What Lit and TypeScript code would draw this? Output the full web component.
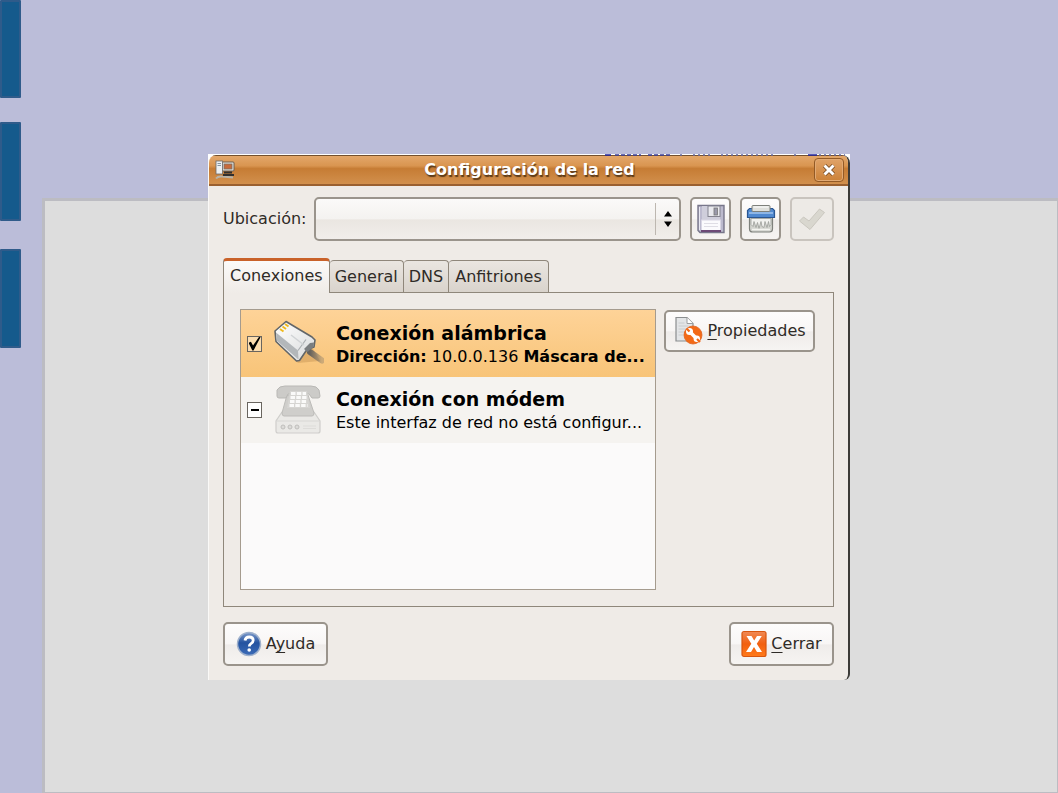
import { LitElement, html, css, svg } from "lit";
import { customElement } from "lit/decorators.js";

const saveIcon = svg`<svg viewBox="0 0 30 32" width="30" height="32" aria-hidden="true">
  <path d="M2 2.500h26v27H4l-2-2z" fill="#bcbace" stroke="#77768a" stroke-width="1.400"/>
  <path d="M3.500 4v23" stroke="#e8e8f2" stroke-width="1"/>
  <rect x="6" y="3" width="18" height="14" fill="#cfcedb"/>
  <rect x="12" y="3" width="12" height="10.500" fill="#e9e9ee" stroke="#84838f"/>
  <rect x="18" y="5" width="3.500" height="7" fill="#9a99aa" stroke="#777" stroke-width=".8"/>
  <rect x="5.500" y="17" width="19" height="10.500" fill="#fbfafd" stroke="#d9d6e4"/>
  <path d="M8 20.500h14M8 23.500h14" stroke="#dfdde5"/>
  <rect x="5" y="27" width="20" height="2" fill="#6d4a77"/>
</svg>`;

const shredIcon = svg`<svg viewBox="0 0 30 32" width="30" height="32" aria-hidden="true">
  <path d="M3.500 14h23v12q0 3-3 3h-17q-3 0-3-3z" fill="#d2d3ce" stroke="#7f817c" stroke-width="1.200"/>
  <path d="M5 15.500v6l2 2 1-5 2 6 1.500-5 1.500 6 2-7 1 5 2 1 1-6 2 6 1.500-6 1 5 1.500-2v-6z" fill="#f1f1ee" stroke="#9b9d98" stroke-width=".8"/>
  <path d="M6 26.500h18" stroke="#f4f4f0" stroke-width="1.500"/>
  <path d="M3.500 5.500h23l2 2v7h-27v-7z" fill="#5089d0" stroke="#2c5792" stroke-width="1.200"/>
  <path d="M3 10h24" stroke="#a3c6ee" stroke-width="1.500"/>
  <rect x="6" y="2.500" width="18" height="6" rx="1" fill="#dedfdb" stroke="#7e807b"/>
  <path d="M7.500 4h15" stroke="#fff"/>
</svg>`;

const applyIcon = svg`<svg viewBox="0 0 30 32" width="30" height="32" aria-hidden="true">
  <path d="M2.500 18l4-4 5.500 4L22.500 6l5 3.500L13 26.500z" fill="#d9d7cf" stroke="#cac7bf" stroke-linejoin="round"/>
</svg>`;

const plugIcon = svg`<svg viewBox="0 0 50 50" width="50" height="50" aria-hidden="true">
  <defs>
    <linearGradient id="plug" x1="0" y1="0" x2="1" y2="1"><stop offset="0" stop-color="#fff"/><stop offset="1" stop-color="#d8dadb"/></linearGradient>
    <linearGradient id="cord" x1="0" y1="0" x2="1" y2="0"><stop offset="0" stop-color="#66625d"/><stop offset="1" stop-color="#8a7d6b" stop-opacity=".4"/></linearGradient>
  </defs>
  <path d="M4 25l20 19 22-2-8-14z" fill="#a8773a" opacity=".3"/>
  <path d="M36 33l12 8.500" stroke="url(#cord)" stroke-width="6" stroke-linecap="round"/>
  <path d="M12 2.500L38 18l3 3-1 7-7 2.500-7.500 11-3 .5L2 22.500 1 12z" fill="url(#plug)" stroke="#626669" stroke-width="1.600" stroke-linejoin="round"/>
  <path d="M2 13.500l22 18 .5 9L3 22z" fill="#b3b7ba"/>
  <path d="M24 31.500l8-11" stroke="#aaaeb1" stroke-width="1.200"/>
  <path d="M30 30l6-6 4-.5-.5 4.500-6 5z" fill="#7b7e80"/>
  <path d="M17 16l13 10" fill="none" stroke="#d0d3d5" stroke-width="1.500"/>
  <path d="M6 10l3.500 2.500M8.500 7.500l3.500 2.500M11 5l3.500 2.500" stroke="#efb91e" stroke-width="2"/>
</svg>`;

const phoneIcon = svg`<svg viewBox="0 0 50 50" width="50" height="50" aria-hidden="true">
  <path d="M8 27h32l6 9v10q0 2-2 2H4q-2 0-2-2V36z" fill="#eae9e6" stroke="#cfcecb" stroke-width="1.200"/>
  <path d="M2.500 36h43" stroke="#d8d7d4"/>
  <path d="M13 10h21l6 18q0 3-2 3H10q-2 0-2-3z" fill="#cfcecb" stroke="#bdbcb9"/>
  <path d="M3 5q2-4 8-4h26q6 0 8 4l1 6q0 2-2 2h-6l-3-4H14l-2 4H5q-2 0-2-2z" fill="#cccbc8" stroke="#b9b8b5"/>
  <path d="M16 6h17l3 17H13z" fill="#d6d5d2"/>
  <path d="M17 8.500h15M16.500 12.500h16M16 16.500h17M15.500 20.500h18" stroke="#fafaf9" stroke-width="3" stroke-dasharray="4.500 1.300"/>
  <g fill="#dcdbd8" stroke="#bfbebb"><circle cx="9" cy="42" r="2"/><circle cx="16" cy="42" r="2"/><circle cx="23" cy="42" r="2"/></g>
  <path d="M29 41h13M29 43.500h13" stroke="#dddcd9"/>
</svg>`;

const propsIcon = svg`<svg viewBox="0 0 30 30" width="30" height="30" aria-hidden="true">
  <path d="M3 1.500h11l6 6v17.500H3z" fill="#e3e5e7" stroke="#8a8d8f" stroke-width="1.200"/>
  <path d="M14 1.500v6h6" fill="#fff" stroke="#9a9d9f"/>
  <path d="M5.500 7h6M5.500 10h10M5.500 13h8M5.500 16h6M5.500 19h5" stroke="#c9ccce"/>
  <circle cx="20" cy="19" r="9" fill="#f36a17" stroke="#e0631f" stroke-width=".8"/>
  <path d="M17 16l6.500 6.500" stroke="#fff" stroke-width="3.500"/>
  <circle cx="16.500" cy="15.500" r="3.500" fill="#fff"/><circle cx="23.800" cy="22.800" r="3.200" fill="#fff"/>
  <path d="M13.500 12.500l3 3M27 26l-3-3" stroke="#f36a17" stroke-width="2.200"/>
</svg>`;

const helpIcon = svg`<svg viewBox="0 0 26 28" width="26" height="28" aria-hidden="true">
  <defs><linearGradient id="help" x1="0" y1="0" x2="0" y2="1"><stop offset="0" stop-color="#7c9acb"/><stop offset=".45" stop-color="#2453a0"/><stop offset="1" stop-color="#3c6cb8"/></linearGradient></defs>
  <circle cx="13" cy="14" r="11.500" fill="url(#help)" stroke="#9fb1cc" stroke-width="1.500"/>
  <path d="M9 10.500q.5-3.500 4.200-3.500 4 0 4 3.300 0 2-2.200 3.300-1.700 1-1.700 3" fill="none" stroke="#fff" stroke-width="2.800"/>
  <circle cx="13.200" cy="20" r="1.800" fill="#fff"/>
</svg>`;

const closeIcon = svg`<svg viewBox="0 0 26 28" width="26" height="28" aria-hidden="true">
  <defs><linearGradient id="close" x1="0" y1="0" x2="0" y2="1"><stop offset="0" stop-color="#f08a55"/><stop offset=".5" stop-color="#f2600f"/><stop offset="1" stop-color="#ff7a1a"/></linearGradient></defs>
  <rect x="1" y="1.500" width="24" height="25" rx="2" fill="url(#close)" stroke="#d8560f" stroke-width="1.200"/>
  <path d="M5.500 6h5l2.700 4.500L16 6h4.800l-5 7.800 5.200 8.200h-5l-3-5-3 5H5l5.300-8.200z" fill="#fff"/>
</svg>`;

const networkIcon = svg`<svg viewBox="0 0 20 20" width="20" height="20" aria-hidden="true">
  <rect x="7" y="2" width="12" height="9" rx="1" fill="#e6e4de" stroke="#6a5c50"/>
  <rect x="9" y="4" width="8" height="5" fill="#c86a3b" stroke="#77706a" stroke-width=".8"/>
  <path d="M9 12.500h8M8 15h11" stroke="#33302e" stroke-width="2"/>
  <rect x="1" y="1" width="6.500" height="13" fill="#eceff1" stroke="#6b6a69" stroke-width=".8"/>
  <path d="M2.500 3.500h3.500M2.500 5.500h3.500" stroke="#8393a1"/>
  <path d="M1 18.500q2-2.500 6-2l11 1" fill="none" stroke="#b8b3a8" stroke-width="2"/>
</svg>`;

const crossIcon = svg`<svg viewBox="0 0 14 14" width="14" height="14" aria-hidden="true">
  <path d="M2.500 2.500l9 9M11.500 2.500l-9 9" stroke="#70451d" stroke-width="4.500"/>
  <path d="M2.500 2.500l9 9M11.500 2.500l-9 9" stroke="#fff" stroke-width="3"/>
</svg>`;

/* Slivers of the window lying behind the dialog's top edge. */
const remnant = svg`<svg class="remnant" viewBox="0 0 246 2" width="246" height="2" aria-hidden="true">
  <g fill="none" stroke="#3a3f9a" stroke-width="1.500">
    <path d="M1 1h6M204 1h9" stroke="#2024a0"/>
    <path d="M11 1h26M44 1h23" stroke-dasharray="4 2"/>
    <path d="M76 1h2M89 1h20M117 1h52M190 1h3M215 1h26" stroke="#6468a0" stroke-dasharray="2 3"/>
  </g>
</svg>`;

@customElement("app-root")
export class AppRoot extends LitElement {
  static styles = css`
    :host { display: block; font-family: "DejaVu Sans", sans-serif; font-size: 16px; line-height: 20px; color: #2f2b27; }
    * { box-sizing: border-box; }
    svg { display: block; flex: none; }
    u { text-decoration-skip-ink: none; text-underline-offset: 3px; }
    .slide { display: grid; grid-template: minmax(100vh, auto) / 100%; background: #bbbdd9; overflow: hidden; }
    .slide > * { grid-area: 1 / 1; }
    .bars { display: grid; grid-template-rows: 98px 24px 99px 28px 99px; align-content: start; width: 21px; }
    .bar { background: #155a8c; border: 2px solid #2f5b8a; border-radius: 1px; }
    .bar:nth-child(2) { grid-row: 3; }
    .bar:nth-child(3) { grid-row: 5; }
    .panel { margin: 198px 0 0 42px; background: #ddd; border: solid #bcbcc2; border-width: 3px 1px 1px 3px; }
    .dialog { align-self: start; margin: 154px 208px 0; background: linear-gradient(#fff 40px, #ddd 40px); }
    .edge { display: flex; justify-content: flex-end; height: 1px; }
    .frame { background: #efebe7; border-right: 2px solid #3c3b38; border-left: 1px solid #faf9f7; border-radius: 8px 8px 6px 0; overflow: hidden; }
    .title { display: grid; grid-template-columns: 30px 1fr 30px; align-items: center; height: 31px; padding: 0 4px 0 6px; border-top: 1px solid #74502d; border-bottom: 2px solid #9a6030; background: linear-gradient(#e3a76a, #d99550 35%, #c67c34 45%, #d2904d); }
    h1 { margin: 0; text-align: center; font-size: 16px; line-height: 20px; color: #fff; text-shadow: 1px 2px 1px #5c3a18; }
    .x { width: 30px; height: 24px; padding: 0; display: grid; place-items: center; border: 1px solid #935a26; border-radius: 4px; background: linear-gradient(#e0a368, #cc8238); box-shadow: inset 0 0 0 1px #e2aa74; }
    .content { padding: 11px 14px 14px; }
    .toolbar { display: grid; grid-template-columns: 82px 1fr 41px 41px 44px; column-gap: 9px; height: 44px; }
    .toolbar label { align-self: center; }
    .combo { display: grid; }
    .combo > * { grid-area: 1 / 1; }
    select, .btn { font: inherit; color: inherit; border: 2px solid #9a948c; border-radius: 5px; background: linear-gradient(#fbfaf9, #f4f2f0 50%, #eae6e1 52%, #f1eeeb); }
    select { appearance: none; width: 100%; height: 44px; padding: 0 30px 0 8px; }
    .arrows { justify-self: end; align-self: center; pointer-events: none; }
    .btn { display: flex; align-items: center; justify-content: center; gap: 4px; padding: 0; white-space: nowrap; background: linear-gradient(#fdfcfc, #f8f6f5 50%, #efecea 52%, #f6f4f2); }
    .btn:disabled { border-color: #c9c4be; background: #edeae6; }
    .tabs { display: flex; align-items: flex-end; margin-top: 17px; }
    .tab { font: inherit; color: inherit; height: 32px; padding: 0 5px; border: 1px solid #8f877b; border-left-width: 0; border-bottom: 0; border-radius: 4px 4px 0 0; background: linear-gradient(#eae6e1, #d9d3cc); }
    .tab:last-child { padding: 0 6px; }
    .tab.on { height: 35px; margin-bottom: -1px; padding: 0 6px 2px; border-left-width: 1px; border-top: 3px solid #c9622a; background: linear-gradient(#fbfaf9, #efebe7); }
    .page { display: grid; grid-template-columns: 1fr 151px; align-items: start; column-gap: 8px; padding: 16px 18px 16px 16px; border: 1px solid #8f877b; }
    .list { height: 281px; margin: 0; padding: 0; list-style: none; border: 1px solid #a59b8e; background: #fbfafa; }
    .row { display: grid; grid-template-columns: 15px 50px 1fr; column-gap: 12px; align-items: center; height: 66px; padding: 0 6px; background: #f5f3f0; color: #000; }
    .row.sel { height: 67px; background: linear-gradient(#fed398, #f8c478); }
    .row input { appearance: none; display: grid; place-items: center; width: 15px; height: 16px; margin: 0; border: 1px solid #69655f; background: #fff; }
    .row.sel input { background: #fbdcae; }
    .row input::before { content: ""; width: 8px; height: 2px; background: #000; }
    .row input:checked::before { width: 12px; height: 14px; clip-path: polygon(0 45%, 20% 38%, 38% 65%, 90% 0, 100% 5%, 42% 100%, 32% 100%); }
    .text { min-width: 0; }
    .name, .info { display: block; overflow: hidden; white-space: nowrap; }
    .name { font-size: 19px; line-height: 25px; font-weight: bold; }
    .info { font-size: 16px; line-height: 21px; }
    .props { height: 42px; margin-top: 1px; }
    .actions { display: flex; justify-content: space-between; margin-top: 15px; }
    .actions .btn { width: 105px; height: 44px; }
  `;

  render() {
    return html`<div class="slide">
      <div class="panel"></div>
      <div class="bars"><div class="bar"></div><div class="bar"></div><div class="bar"></div></div>
      <section class="dialog" aria-labelledby="title">
        <div class="edge">${remnant}</div>
        <div class="frame">
          <header class="title">
            ${networkIcon}
            <h1 id="title">Configuración de la red</h1>
            <button class="x" aria-label="Cerrar ventana">${crossIcon}</button>
          </header>
          <div class="content">
            <div class="toolbar">
              <label for="place">Ubicación:</label>
              <div class="combo">
                <select id="place"><option></option></select>
                <svg class="arrows" viewBox="0 0 28 36" width="28" height="36" aria-hidden="true"><path d="M2.500 2v32" stroke="#bdb7b0"/><path d="M11 15.500l4-5.500 4 5.500zM11 20.500l4 5.500 4-5.500z" fill="#000"/></svg>
              </div>
              <button class="btn" aria-label="Guardar">${saveIcon}</button>
              <button class="btn" aria-label="Eliminar">${shredIcon}</button>
              <button class="btn" aria-label="Aplicar" disabled>${applyIcon}</button>
            </div>
            <div class="tabs" role="tablist">
              <button class="tab on" role="tab" aria-selected="true">Conexiones</button>
              <button class="tab" role="tab">General</button>
              <button class="tab" role="tab">DNS</button>
              <button class="tab" role="tab">Anfitriones</button>
            </div>
            <div class="page" role="tabpanel">
              <ul class="list">
                <li class="row sel">
                  <input type="checkbox" id="wired" checked>
                  ${plugIcon}
                  <label class="text" for="wired"><span class="name">Conexión alámbrica</span><span class="info"><b>Dirección:</b> 10.0.0.136 <b>Máscara de...</b></span></label>
                </li>
                <li class="row">
                  <input type="checkbox" id="modem">
                  ${phoneIcon}
                  <label class="text" for="modem"><span class="name">Conexión con módem</span><span class="info">Este interfaz de red no está configur...</span></label>
                </li>
              </ul>
              <button class="btn props">${propsIcon}<span><u>P</u>ropiedades</span></button>
            </div>
            <div class="actions">
              <button class="btn">${helpIcon}<span>A<u>y</u>uda</span></button>
              <button class="btn">${closeIcon}<span><u>C</u>errar</span></button>
            </div>
          </div>
        </div>
      </section>
    </div>`;
  }
}
